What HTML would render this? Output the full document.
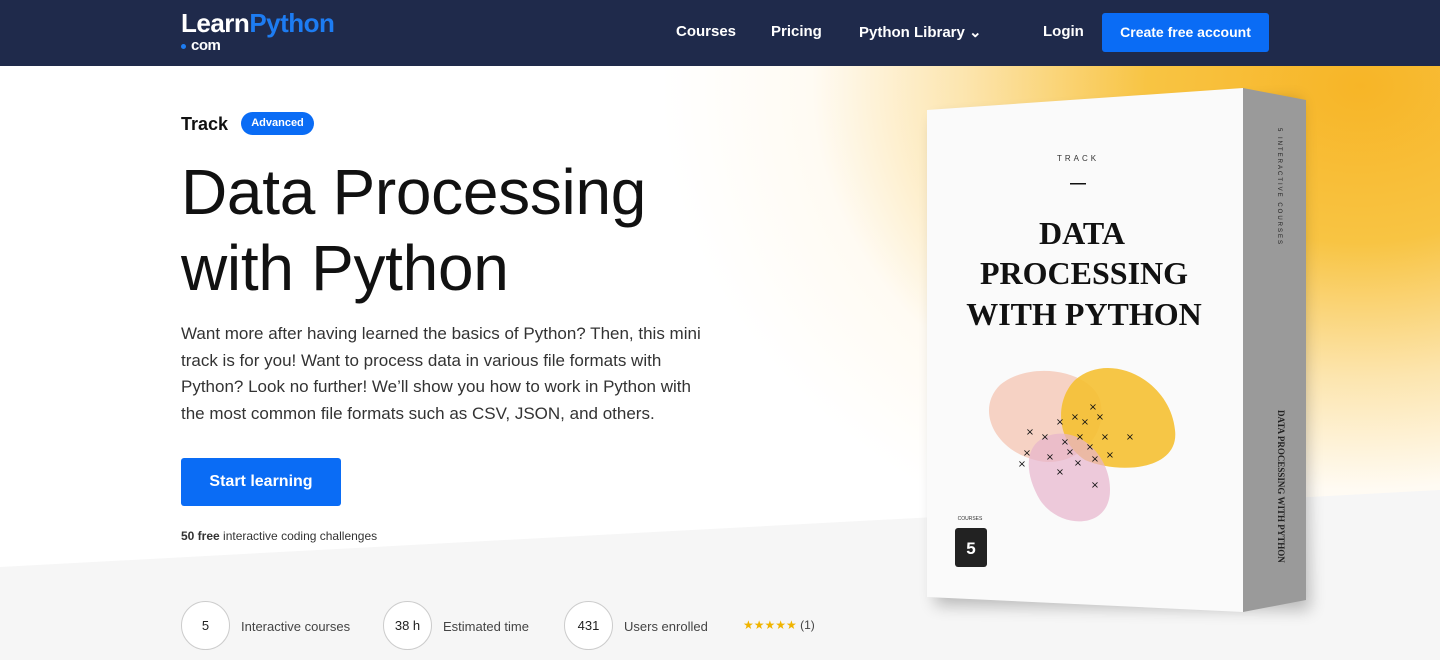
<!DOCTYPE html>
<html><head><meta charset="utf-8"><style>
*{margin:0;padding:0;box-sizing:border-box}
body{width:1440px;height:660px;overflow:hidden;font-family:"Liberation Sans",sans-serif;background:#fff;position:relative}
.nav{position:absolute;top:0;left:0;width:1440px;height:66px;background:#1f2a4b}
.logo{position:absolute;left:181px;top:8px;color:#fff;font-weight:bold;font-size:26px;letter-spacing:-0.5px}
.logo span{color:#1d7cf2}
.logo small{position:absolute;left:0;top:29px;font-size:15px;white-space:nowrap}
.logo small i{display:inline-block;width:5px;height:5px;border-radius:50%;background:#1d7cf2;margin-right:5px;vertical-align:middle}
.nl{position:absolute;top:23px;color:#fff;font-weight:bold;font-size:15px}
.btn{position:absolute;left:1102px;top:13px;width:167px;height:39px;background:#0a6cf5;color:#fff;font-weight:bold;font-size:14px;border-radius:3px;text-align:center;line-height:39px}
.bg{position:absolute;top:66px;left:0;width:1440px;height:594px;background:radial-gradient(ellipse 760px 560px at 1360px 20px,#f7b527 0%,#f8c443 28%,rgba(251,218,140,.7) 52%,rgba(255,243,220,.35) 72%,rgba(255,255,255,0) 92%)}
.gray{position:absolute;left:0;top:0;width:1440px;height:660px;background:#f6f6f6;clip-path:polygon(0 567px,1440px 490px,1440px 660px,0 660px)}
h1{position:absolute;left:181px;top:154px;font-size:64px;line-height:76px;font-weight:normal;color:#111;letter-spacing:-0.3px}
.track{position:absolute;left:181px;top:114px;font-size:18px;color:#111;font-weight:bold}
.badge{position:absolute;left:241px;top:112px;width:73px;height:23px;border-radius:12px;background:#0a6cf5;color:#fff;font-size:11px;font-weight:bold;text-align:center;line-height:23px}
p.d{position:absolute;left:181px;top:321px;width:530px;font-size:17px;line-height:26.5px;color:#333}
.start{position:absolute;left:181px;top:458px;width:160px;height:48px;background:#0a6cf5;color:#fff;font-weight:bold;font-size:16px;border-radius:3px;text-align:center;line-height:48px}
.free{position:absolute;left:181px;top:529px;font-size:12px;color:#333}
.circ{position:absolute;top:601px;width:49px;height:49px;border-radius:50%;border:1px solid #ccc;background:#fff;text-align:center;line-height:47px;font-size:13px;color:#222}
.sl{position:absolute;top:619px;font-size:13px;color:#444}
</style></head><body>
<div class="bg"></div>
<div class="gray"></div>
<div class="nav">
<div class="logo">Learn<span>Python</span><small><i></i>com</small></div>
<div class="nl" style="left:676px">Courses</div>
<div class="nl" style="left:771px">Pricing</div>
<div class="nl" style="left:859px">Python Library ⌄</div>
<div class="nl" style="left:1043px">Login</div>
<div class="btn">Create free account</div>
</div>
<div class="track">Track</div><div class="badge">Advanced</div>
<h1>Data Processing<br>with Python</h1>
<p class="d">Want more after having learned the basics of Python? Then, this mini track is for you! Want to process data in various file formats with Python? Look no further! We’ll show you how to work in Python with the most common file formats such as CSV, JSON, and others.</p>
<div class="start">Start learning</div>
<div class="free"><b>50 free</b> interactive coding challenges</div>
<div class="circ" style="left:181px">5</div><div class="sl" style="left:241px">Interactive courses</div>
<div class="circ" style="left:383px">38 h</div><div class="sl" style="left:443px">Estimated time</div>
<div class="circ" style="left:564px">431</div><div class="sl" style="left:624px">Users enrolled</div>
<div class="sl" style="left:743px;color:#f0b400;font-size:12px;top:618px">★★★★★ <span style="color:#444">(1)</span></div>
<svg style="position:absolute;left:900px;top:80px" width="440" height="560" viewBox="900 80 440 560">
<defs><filter id="s"><feGaussianBlur stdDeviation="8"/></filter></defs>
<polygon points="935,120 1300,100 1310,610 935,605" fill="#000" opacity=".25" filter="url(#s)"/>
<polygon points="927,110 1243,88 1243,612 927,597" fill="#fafafa"/>
<polygon points="1243,88 1306,100 1306,600 1243,612" fill="#9a9a9a"/>
<text x="1078" y="161" font-family="Liberation Sans" font-size="8" letter-spacing="3" text-anchor="middle" fill="#333">TRACK</text>
<rect x="1070" y="183" width="16" height="1.5" fill="#111"/>
<g font-family="Liberation Serif" font-weight="bold" text-anchor="middle" fill="#111">
<text x="1082" y="244" font-size="32">DATA</text>
<text x="1084" y="284" font-size="32">PROCESSING</text>
<text x="1084" y="325" font-size="32">WITH PYTHON</text></g>
<path d="M1000 385 C1030 360 1090 370 1100 400 C1110 440 1070 470 1035 460 C995 450 975 410 1000 385Z" fill="#f3b7a0" opacity=".6"/>
<path d="M1075 380 C1110 350 1170 380 1175 430 C1180 470 1120 475 1085 460 C1055 440 1055 400 1075 380Z" fill="#f5c032" opacity=".9"/>
<path d="M1040 440 C1070 420 1110 450 1110 490 C1110 530 1060 530 1040 500 C1025 475 1025 450 1040 440Z" fill="#e7b4cc" opacity=".7"/>
<g font-size="10" fill="#111" font-family="DejaVu Sans" text-anchor="middle">
<text x="1030" y="435">×</text><text x="1045" y="440">×</text><text x="1060" y="425">×</text><text x="1075" y="420">×</text><text x="1093" y="410">×</text><text x="1085" y="425">×</text><text x="1100" y="420">×</text><text x="1065" y="445">×</text><text x="1080" y="440">×</text><text x="1090" y="450">×</text><text x="1105" y="440">×</text><text x="1130" y="440">×</text><text x="1050" y="460">×</text><text x="1070" y="455">×</text><text x="1078" y="466">×</text><text x="1095" y="462">×</text><text x="1022" y="467">×</text><text x="1060" y="475">×</text><text x="1095" y="488">×</text><text x="1110" y="458">×</text><text x="1027" y="456">×</text></g>
<text x="970" y="520" font-family="Liberation Sans" font-size="5" text-anchor="middle" fill="#333">COURSES</text>
<rect x="955" y="528" width="32" height="39" rx="3" fill="#222"/>
<text x="971" y="554" font-family="Liberation Sans" font-weight="bold" font-size="17" text-anchor="middle" fill="#fff">5</text>
<text transform="translate(1278,128) rotate(90)" font-family="Liberation Sans" font-size="6" letter-spacing="2" fill="#222">5 INTERACTIVE COURSES</text>
<text transform="translate(1278,410) rotate(90)" font-family="Liberation Serif" font-weight="bold" font-size="9" fill="#222">DATA PROCESSING WITH PYTHON</text>
</svg>
</body></html>
